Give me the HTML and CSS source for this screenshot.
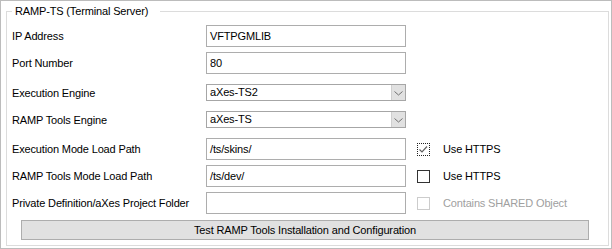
FILE: index.html
```html
<!DOCTYPE html>
<html lang="en">
<head>
    <meta charset="UTF-8">
    <title>RAMP-TS Settings</title>
    <link rel="stylesheet" href="styles.css">
</head>
<body>

    <div class="panel">
        <fieldset class="group">
            <legend>RAMP-TS (Terminal Server)</legend>

            <div class="form">
                <div class="row">
                    <label class="field-label">IP Address</label>
                    <div class="textbox">VFTPGMLIB</div>
                </div>
                <div class="row">
                    <label class="field-label">Port Number</label>
                    <div class="textbox">80</div>
                </div>
                <div class="row combo-row">
                    <label class="field-label">Execution Engine</label>
                    <div class="combo">
                        <span class="combo-text">aXes-TS2</span>
                        <span class="combo-btn">
                            <svg width="9" height="5" viewBox="0 0 9 5"><polyline points="0.5,0.5 4.5,4 8.5,0.5" fill="none" stroke="#707070" stroke-width="1"/></svg>
                        </span>
                    </div>
                </div>
                <div class="row combo-row">
                    <label class="field-label">RAMP Tools Engine</label>
                    <div class="combo">
                        <span class="combo-text">aXes-TS</span>
                        <span class="combo-btn">
                            <svg width="9" height="5" viewBox="0 0 9 5"><polyline points="0.5,0.5 4.5,4 8.5,0.5" fill="none" stroke="#707070" stroke-width="1"/></svg>
                        </span>
                    </div>
                </div>
                <div class="row after-combo">
                    <label class="field-label">Execution Mode Load Path</label>
                    <div class="textbox">/ts/skins/</div>
                    <div class="check">
                        <span class="box focused">
                            <svg width="11" height="11" viewBox="0 0 11 11"><polyline points="1.5,5.5 4,8 9,2.5" fill="none" stroke="#606060" stroke-width="1.2"/></svg>
                        </span>
                        <span class="check-label">Use HTTPS</span>
                    </div>
                </div>
                <div class="row">
                    <label class="field-label">RAMP Tools Mode Load Path</label>
                    <div class="textbox">/ts/dev/</div>
                    <div class="check">
                        <span class="box"></span>
                        <span class="check-label">Use HTTPS</span>
                    </div>
                </div>
                <div class="row">
                    <label class="field-label">Private Definition/aXes Project Folder</label>
                    <div class="textbox"></div>
                    <div class="check disabled">
                        <span class="box"></span>
                        <span class="check-label">Contains SHARED Object</span>
                    </div>
                </div>
            </div>

            <button class="test-btn">Test RAMP Tools Installation and Configuration</button>
        </fieldset>
    </div>

</body>
</html>
```

FILE: styles.css
```css
/* Global styles */
body {
    margin: 0;
    padding: 0;
    background-color: #fff;
    font-family: 'Liberation Sans', Arial, sans-serif;
    font-size: 11px;
    letter-spacing: -0.15px;
    color: #000;
}

/* Outer frame */
.panel {
    box-sizing: border-box;
    width: 612px;
    height: 249px;
    border: 1px solid #bcbcbc;
    padding: 4px 2px 2px 5px;
}

/* Group box */
.group {
    box-sizing: border-box;
    height: 100%;
    margin: 0;
    padding: 7px 0 0 5px;
    border: 1px solid #dcdcdc;
}

.group legend {
    padding: 0 12px 0 3px;
    line-height: 13px;
}

/* Form rows */
.form {
    display: flex;
    flex-direction: column;
    gap: 5px;
}

.row {
    display: flex;
    align-items: center;
    height: 22px;
}

.combo-row,
.after-combo {
    margin-top: 5px;
    height: 17px;
}

.after-combo {
    height: 22px;
}

.field-label {
    width: 194px;
    flex-shrink: 0;
}

.textbox {
    box-sizing: border-box;
    width: 200px;
    height: 22px;
    border: 1px solid #adadad;
    padding: 0 3px;
    line-height: 20px;
    white-space: nowrap;
}

/* Combo boxes */
.combo {
    box-sizing: border-box;
    display: flex;
    width: 200px;
    height: 17px;
    border: 1px solid #a6a6a6;
}

.combo-text {
    flex: 1;
    padding-left: 3px;
    line-height: 15px;
}

.combo-btn {
    box-sizing: border-box;
    display: flex;
    align-items: center;
    justify-content: center;
    width: 14px;
    height: 15px;
    background-color: #e1e1e1;
    border-left: 1px solid #cfcfcf;
    padding-top: 2px;
}

/* Check boxes */
.check {
    display: flex;
    align-items: center;
    margin-left: 11px;
}

.box {
    box-sizing: border-box;
    display: flex;
    align-items: center;
    justify-content: center;
    width: 13px;
    height: 13px;
    border: 1px solid #333;
    margin-right: 13px;
}

.box.focused {
    border: 1px dotted #222;
}

.check.disabled .box {
    border-color: #cccccc;
}

.check.disabled .check-label {
    color: #a0a0a0;
}

/* Test button */
.test-btn {
    box-sizing: border-box;
    display: block;
    width: 568px;
    height: 20px;
    margin: 6px 0 0 9px;
    padding: 0;
    font-family: inherit;
    font-size: 11px;
    letter-spacing: -0.15px;
    color: #000;
    background-color: #e1e1e1;
    border: 1px solid #adadad;
    border-radius: 0;
}
```
